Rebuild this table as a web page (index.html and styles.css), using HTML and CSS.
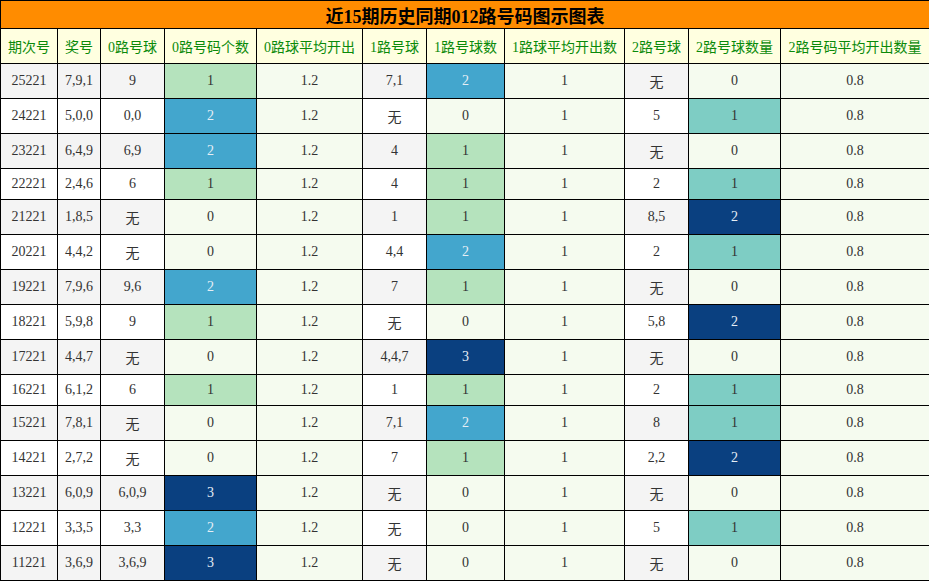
FILE: index.html
```html
<!DOCTYPE html>
<html lang="zh">
<head>
<meta charset="utf-8">
<title>近15期历史同期012路号码图示图表</title>
<link rel="stylesheet" href="styles.css">
</head>
<body>
<table class="chart">
<colgroup>
<col class="w57"><col class="w43"><col class="w64"><col class="w92"><col class="w106"><col class="w64"><col class="w78"><col class="w120"><col class="w64"><col class="w92"><col class="w149">
</colgroup>
<thead>
<tr><th class="title" colspan="11">近15期历史同期012路号码图示图表</th></tr>
<tr class="head">
<th>期次号</th><th>奖号</th><th>0路号球</th><th>0路号码个数</th><th>0路球平均开出</th><th>1路号球</th><th>1路号球数</th><th>1路球平均开出数</th><th>2路号球</th><th>2路号球数量</th><th>2路号码平均开出数量</th>
</tr>
</thead>
<tbody>
<tr><td class="b">25221</td><td class="b">7,9,1</td><td class="b">9</td><td class="g1">1</td><td class="avg">1.2</td><td class="b">7,1</td><td class="g2">2</td><td class="avg">1</td><td class="b">无</td><td class="avg">0</td><td class="avg">0.8</td></tr>
<tr><td class="b">24221</td><td class="b">5,0,0</td><td class="b">0,0</td><td class="g2">2</td><td class="avg">1.2</td><td class="b">无</td><td class="avg">0</td><td class="avg">1</td><td class="b">5</td><td class="t1">1</td><td class="avg">0.8</td></tr>
<tr><td class="b">23221</td><td class="b">6,4,9</td><td class="b">6,9</td><td class="g2">2</td><td class="avg">1.2</td><td class="b">4</td><td class="g1">1</td><td class="avg">1</td><td class="b">无</td><td class="avg">0</td><td class="avg">0.8</td></tr>
<tr><td class="b">22221</td><td class="b">2,4,6</td><td class="b">6</td><td class="g1">1</td><td class="avg">1.2</td><td class="b">4</td><td class="g1">1</td><td class="avg">1</td><td class="b">2</td><td class="t1">1</td><td class="avg">0.8</td></tr>
<tr><td class="b">21221</td><td class="b">1,8,5</td><td class="b">无</td><td class="avg">0</td><td class="avg">1.2</td><td class="b">1</td><td class="g1">1</td><td class="avg">1</td><td class="b">8,5</td><td class="g3">2</td><td class="avg">0.8</td></tr>
<tr><td class="b">20221</td><td class="b">4,4,2</td><td class="b">无</td><td class="avg">0</td><td class="avg">1.2</td><td class="b">4,4</td><td class="g2">2</td><td class="avg">1</td><td class="b">2</td><td class="t1">1</td><td class="avg">0.8</td></tr>
<tr><td class="b">19221</td><td class="b">7,9,6</td><td class="b">9,6</td><td class="g2">2</td><td class="avg">1.2</td><td class="b">7</td><td class="g1">1</td><td class="avg">1</td><td class="b">无</td><td class="avg">0</td><td class="avg">0.8</td></tr>
<tr><td class="b">18221</td><td class="b">5,9,8</td><td class="b">9</td><td class="g1">1</td><td class="avg">1.2</td><td class="b">无</td><td class="avg">0</td><td class="avg">1</td><td class="b">5,8</td><td class="g3">2</td><td class="avg">0.8</td></tr>
<tr><td class="b">17221</td><td class="b">4,4,7</td><td class="b">无</td><td class="avg">0</td><td class="avg">1.2</td><td class="b">4,4,7</td><td class="g3">3</td><td class="avg">1</td><td class="b">无</td><td class="avg">0</td><td class="avg">0.8</td></tr>
<tr><td class="b">16221</td><td class="b">6,1,2</td><td class="b">6</td><td class="g1">1</td><td class="avg">1.2</td><td class="b">1</td><td class="g1">1</td><td class="avg">1</td><td class="b">2</td><td class="t1">1</td><td class="avg">0.8</td></tr>
<tr><td class="b">15221</td><td class="b">7,8,1</td><td class="b">无</td><td class="avg">0</td><td class="avg">1.2</td><td class="b">7,1</td><td class="g2">2</td><td class="avg">1</td><td class="b">8</td><td class="t1">1</td><td class="avg">0.8</td></tr>
<tr><td class="b">14221</td><td class="b">2,7,2</td><td class="b">无</td><td class="avg">0</td><td class="avg">1.2</td><td class="b">7</td><td class="g1">1</td><td class="avg">1</td><td class="b">2,2</td><td class="g3">2</td><td class="avg">0.8</td></tr>
<tr><td class="b">13221</td><td class="b">6,0,9</td><td class="b">6,0,9</td><td class="g3">3</td><td class="avg">1.2</td><td class="b">无</td><td class="avg">0</td><td class="avg">1</td><td class="b">无</td><td class="avg">0</td><td class="avg">0.8</td></tr>
<tr><td class="b">12221</td><td class="b">3,3,5</td><td class="b">3,3</td><td class="g2">2</td><td class="avg">1.2</td><td class="b">无</td><td class="avg">0</td><td class="avg">1</td><td class="b">5</td><td class="t1">1</td><td class="avg">0.8</td></tr>
<tr><td class="b">11221</td><td class="b">3,6,9</td><td class="b">3,6,9</td><td class="g3">3</td><td class="avg">1.2</td><td class="b">无</td><td class="avg">0</td><td class="avg">1</td><td class="b">无</td><td class="avg">0</td><td class="avg">0.8</td></tr>
</tbody>
</table>
</body>
</html>
```

FILE: styles.css
```css
html, body {
  margin: 0;
  padding: 0;
  background: #ffffff;
}

.chart {
  width: 929px;
  table-layout: fixed;
  border-collapse: collapse;
  font-family: "Liberation Serif", "Noto Sans CJK SC", serif;
  font-size: 14px;
  color: #333333;
}

.w57 { width: 57px; }
.w43 { width: 43px; }
.w64 { width: 64px; }
.w92 { width: 92px; }
.w106 { width: 106px; }
.w78 { width: 78px; }
.w120 { width: 120px; }
.w149 { width: 149px; }

.chart th,
.chart td {
  border: 1px solid #000000;
  padding: 7px 0;
  text-align: center;
  white-space: nowrap;
  font-weight: normal;
}

.chart th.title {
  padding: 1px 0 0;
  background: #ff8c00;
  color: #000000;
  font-size: 18px;
  font-weight: bold;
}

.head th {
  background: #ffffe0;
  color: #0a8a0a;
}

.chart td.b { background: #ffffff; }
.chart tbody tr:nth-child(odd) td.b { background: #f4f4f4; }

.chart td.avg { background: #f5fbef; }
.chart td.g1 { background: #b5e3bd; }
.chart td.t1 { background: #7ecdc4; }
.chart td.g2 { background: #43a6cd; color: #e6eef5; }
.chart td.g3 { background: #0a4080; color: #e6eef5; }
```
